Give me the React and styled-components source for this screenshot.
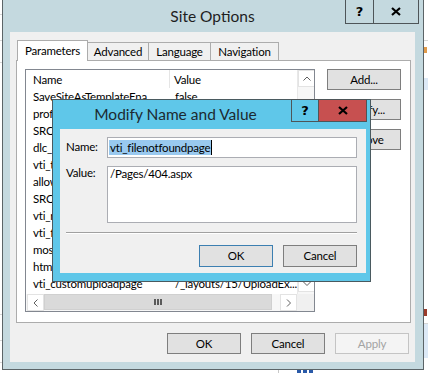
import React from "react";
import styled, { createGlobalStyle } from "styled-components";

const GlobalStyle = createGlobalStyle`
  html, body {
    margin: 0;
    padding: 0;
  }
  body {
    background: #ffffff;
    font-family: Lato, "Noto Sans", "Liberation Sans", sans-serif;
    font-size: 11.5px;
    letter-spacing: -0.2px;
    color: #000000;
  }
  * {
    box-sizing: border-box;
  }
`;

const line = (x, y, w, h, c) =>
  `linear-gradient(${c}, ${c}) ${x}px ${y}px / ${w}px ${h}px no-repeat`;

// whatever lies behind the dialog: a bit of a list page on both sides
const Desktop = styled.div`
  position: relative;
  width: 428px;
  height: 373px;
  overflow: hidden;
  background: ${[
    line(0, 14, 2, 1, "#d6d6d6"),
    line(0, 40, 2, 1, "#d6d6d6"),
    line(0, 62, 2, 1, "#d6d6d6"),
    line(0, 314, 2, 1, "#d6d6d6"),
    line(0, 340, 2, 1, "#d6d6d6"),
    line(0, 362, 2, 1, "#d6d6d6"),
    line(424, 40, 4, 1, "#d6d6d6"),
    line(424, 47, 3, 6, "#e09a4a"),
    line(424, 78, 4, 12, "#dce9f6"),
    line(424, 309, 3, 7, "#9a3a2a"),
    line(424, 323, 4, 1, "#d6d6d6"),
    line(424, 324, 4, 34, "#dce9f6"),
    line(278, 370, 1, 3, "#c8c8c8"),
    line(297, 370, 4, 3, "#2a5aa8"),
    line(303, 370, 4, 3, "#2a5aa8"),
    line(309, 370, 4, 3, "#2a5aa8"),
  ].join(", ")},
    #ffffff;
`;

const Window = styled.div`
  width: 422px;
  height: 371px;
  margin: -1px 0 0 2px;
  border: 1px solid #5b6467;
  background: #c4d9df;
  padding: 0 8px 7px 7px;
  display: flex;
  flex-direction: column;
`;

const TitleBar = styled.div`
  height: 32px;
  flex: none;
  display: grid;
  grid-template-columns: 1fr auto 1fr;
  align-items: center;
`;

const Title = styled.div`
  grid-column: 2;
  font-size: 15.5px;
  letter-spacing: 0;
  color: #1e1e1e;
  padding-bottom: 1px;
`;

const CaptionButtons = styled.div`
  grid-column: 3;
  justify-self: end;
  align-self: start;
  display: flex;
  margin: -1px ${(p) => p.$pull}px 0 0;
`;

const CaptionButton = styled.div`
  width: ${(p) => p.$w}px;
  height: ${(p) => p.$h}px;
  display: flex;
  align-items: center;
  justify-content: center;
  border: 1px solid #4e5558;
  border-left-width: ${(p) => (p.$joined ? 0 : 1)}px;
  background: ${(p) => p.$bg};
  font-family: "DejaVu Sans", sans-serif;
  font-weight: bold;
  font-size: 13px;
  letter-spacing: 0;
  color: #000;
`;

const Client = styled.div`
  flex: 1;
  background: #f0f0f0;
  padding: 8px 4px 8px 6px;
  display: flex;
  flex-direction: column;
`;

const TabStrip = styled.div`
  display: flex;
  align-items: flex-end;
  padding-left: 1px;
  height: 20px;
  position: relative;
  z-index: 1;
`;

const Tab = styled.div`
  width: ${(p) => p.$w}px;
  height: ${(p) => (p.$active ? 21 : 18)}px;
  margin-left: ${(p) => (p.$first ? 0 : -1)}px;
  margin-bottom: ${(p) => (p.$active ? -1 : 0)}px;
  border: 1px solid #acacac;
  border-bottom-width: 0;
  background: ${(p) => (p.$active ? "#ffffff" : "#f0f0f0")};
  display: flex;
  align-items: center;
  justify-content: center;
  padding-bottom: ${(p) => (p.$active ? 2 : 0)}px;
  white-space: nowrap;
  position: relative;
  z-index: ${(p) => (p.$active ? 2 : 1)};
`;

const Panel = styled.div`
  height: 263px;
  flex: none;
  border: 1px solid #acacac;
  background: #ffffff;
  padding: 8px 9px 10px 8px;
  display: flex;
  gap: 12px;
`;

const ListView = styled.div`
  width: 291px;
  height: 243px;
  border: 1px solid #828790;
  display: grid;
  grid-template-columns: 1fr 17px;
  grid-template-rows: 1fr 17px;
  overflow: hidden;
`;

const ListBody = styled.div`
  overflow: hidden;
`;

const HeaderRow = styled.div`
  display: flex;
  height: 18px;
  align-items: center;
`;

const HeaderCell = styled.div`
  width: ${(p) => (p.$w ? `${p.$w}px` : "auto")};
  flex: ${(p) => (p.$w ? "none" : 1)};
  height: 100%;
  display: flex;
  align-items: center;
  padding-left: ${(p) => p.$pad}px;
  border-right: ${(p) => (p.$w ? "1px solid #e5e5e5" : "none")};
`;

const Row = styled.div`
  display: flex;
  height: 17px;
  align-items: center;
`;

const Cell = styled.div`
  width: ${(p) => (p.$w ? `${p.$w}px` : "auto")};
  flex: ${(p) => (p.$w ? "none" : 1)};
  padding-left: ${(p) => p.$pad}px;
  white-space: nowrap;
  overflow: hidden;
`;

const VScroll = styled.div`
  display: flex;
  flex-direction: column;
  justify-content: space-between;
  border-left: 1px solid #e8e8e8;
  background: #f7f7f7;
  padding-bottom: 2px;
`;

const HScroll = styled.div`
  display: flex;
  align-items: stretch;
  padding: 0 0 1px 1px;
  background: #f7f7f7;
`;

const ArrowBox = styled.div`
  width: ${(p) => p.$w || 17}px;
  height: 17px;
  flex: none;
  display: flex;
  align-items: center;
  justify-content: center;
  background: #ffffff;
  border: 1px solid #e3e3e3;
`;

const Thumb = styled.div`
  width: 228px;
  flex: none;
  background: #dadada;
  border: 1px solid #d0d0d0;
  display: flex;
  align-items: center;
  justify-content: center;
`;

const Track = styled.div`
  flex: 1;
`;

const Corner = styled.div`
  background: #f0f0f0;
`;

const SideButtons = styled.div`
  display: flex;
  flex-direction: column;
  gap: 9px;
`;

const Button = styled.div`
  width: 74px;
  height: ${(p) => p.$h || 21}px;
  flex: none;
  display: flex;
  align-items: center;
  justify-content: center;
  padding-bottom: 1px;
  background: ${(p) => (p.$disabled ? "#f4f4f4" : "#e1e1e1")};
  border: 1px solid
    ${(p) => (p.$default ? "#3c7fb1" : p.$disabled ? "#c4c4c4" : "#7e7e7e")};
  color: ${(p) => (p.$disabled ? "#a3a3a3" : "#000000")};
  white-space: nowrap;
`;

const Footer = styled.div`
  display: flex;
  justify-content: flex-end;
  gap: 10px;
  margin-top: 10px;
  padding-right: 2px;
`;

/* the modal dialog lies over the site options window */
const Modal = styled.div`
  position: absolute;
  left: 52px;
  top: 99px;
  width: 319px;
  height: 183px;
  border: 1px solid #4a5a60;
  background: #5fc7e9;
  padding: 0 4px 9px 7px;
  display: flex;
  flex-direction: column;
  z-index: 5;
`;

const ModalTitleBar = styled.div`
  height: 29px;
  flex: none;
  display: flex;
  align-items: flex-start;
`;

const ModalTitle = styled.div`
  flex: 1;
  text-align: center;
  font-size: 15.5px;
  letter-spacing: 0;
  color: #1c2a30;
  padding-top: 5px;
  white-space: nowrap;
`;

const ModalClient = styled.div`
  flex: 1;
  background: #f0f0f0;
  padding: 8px 9px 6px 6px;
  display: flex;
  flex-direction: column;
`;

const Form = styled.div`
  display: grid;
  grid-template-columns: 41px 1fr;
  row-gap: 8px;
`;

const Label = styled.div`
  display: flex;
  align-items: ${(p) => (p.$top ? "flex-start" : "center")};
  padding-bottom: ${(p) => (p.$top ? 0 : 2)}px;
`;

const TextBox = styled.div`
  height: ${(p) => p.$h}px;
  border: 1px solid #abadb3;
  background: #ffffff;
  padding: ${(p) => (p.$multi ? "0 2px" : "0 1px")};
  display: flex;
  align-items: ${(p) => (p.$multi ? "flex-start" : "center")};
  white-space: nowrap;
`;

const Selected = styled.span`
  background: #99c9ef;
  padding: 0 1px;
  line-height: 15px;
`;

const Caret = styled.span`
  width: 1px;
  height: 15px;
  background: #000000;
`;

const Separator = styled.div`
  margin-top: 9px;
  border-top: 1px solid #a0a0a0;
  border-bottom: 1px solid #ffffff;
`;

const ModalFooter = styled.div`
  display: flex;
  justify-content: flex-end;
  gap: 10px;
  margin-top: 11px;
`;

const Chevron = ({ dir }) => {
  const pts = {
    up: "0.5,4.5 4,1 7.5,4.5",
    down: "0.5,1 4,4.5 7.5,1",
    left: "4.5,0.5 1,4 4.5,7.5",
    right: "1,0.5 4.5,4 1,7.5",
  }[dir];
  const vertical = dir === "up" || dir === "down";
  return (
    <svg width={vertical ? 8 : 6} height={vertical ? 6 : 8}>
      <polyline points={pts} fill="none" stroke="#606060" strokeWidth="1" />
    </svg>
  );
};

const Gripper = () => (
  <svg width="8" height="6">
    <rect x="0" y="0" width="2" height="6" fill="#5a5a5a" />
    <rect x="3" y="0" width="2" height="6" fill="#5a5a5a" />
    <rect x="6" y="0" width="2" height="6" fill="#5a5a5a" />
  </svg>
);

const CloseGlyph = () => (
  <svg width="10" height="9">
    <path d="M1 1 L9 8 M9 1 L1 8" stroke="#000" strokeWidth="2.2" />
  </svg>
);

const rows = [
  ["SaveSiteAsTemplateEna...", "false"],
  ["profileschemaversion", "1"],
  ["SRCH_ENH_FTR_URL_SITE", "/SearchCenter/Pages"],
  ["dlc_ExpirationLastRun", "2014-04-12"],
  ["vti_timecreated", "2014-01-10"],
  ["allowdesigner", "1"],
  ["SRCH_SITE_DROPDOWN", "ShowDD"],
  ["vti_rootwebguid", "b6e4d0e1"],
  ["vti_filenotfoundpage", "/Pages/404.aspx"],
  ["mossDefaultContent", "1"],
  ["htmleditor", "1"],
  ["vti_customuploadpage", "/_layouts/15/UploadEx..."],
];

const tabs = [
  ["Parameters", 71],
  ["Advanced", 62],
  ["Language", 63],
  ["Navigation", 69],
];

export default function App() {
  return (
    <Desktop>
      <GlobalStyle />
      <Window>
        <TitleBar>
          <Title>Site Options</Title>
          <CaptionButtons $pull={-4}>
            <CaptionButton $w={29} $h={25} $bg="#c4d9df">
              ?
            </CaptionButton>
            <CaptionButton $w={45} $h={25} $bg="#c4d9df" $joined>
              <CloseGlyph />
            </CaptionButton>
          </CaptionButtons>
        </TitleBar>
        <Client>
          <TabStrip>
            {tabs.map(([name, w], i) => (
              <Tab key={name} $w={w} $first={i === 0} $active={i === 0}>
                {name}
              </Tab>
            ))}
          </TabStrip>
          <Panel>
            <ListView>
              <ListBody>
                <HeaderRow>
                  <HeaderCell $w={144} $pad={7}>
                    Name
                  </HeaderCell>
                  <HeaderCell $pad={4}>Value</HeaderCell>
                </HeaderRow>
                {rows.map(([name, value]) => (
                  <Row key={name}>
                    <Cell $w={144} $pad={7}>
                      {name}
                    </Cell>
                    <Cell $pad={5}>{value}</Cell>
                  </Row>
                ))}
              </ListBody>
              <VScroll>
                <ArrowBox>
                  <Chevron dir="up" />
                </ArrowBox>
                <ArrowBox>
                  <Chevron dir="down" />
                </ArrowBox>
              </VScroll>
              <HScroll>
                <ArrowBox>
                  <Chevron dir="left" />
                </ArrowBox>
                <Thumb>
                  <Gripper />
                </Thumb>
                <Track />
                <ArrowBox>
                  <Chevron dir="right" />
                </ArrowBox>
              </HScroll>
              <Corner />
            </ListView>
            <SideButtons>
              <Button>Add...</Button>
              <Button>Modify...</Button>
              <Button>Remove</Button>
            </SideButtons>
          </Panel>
          <Footer>
            <Button>OK</Button>
            <Button>Cancel</Button>
            <Button $disabled>Apply</Button>
          </Footer>
        </Client>
      </Window>

      <Modal>
        <ModalTitleBar>
          <ModalTitle>Modify Name and Value</ModalTitle>
          <CaptionButtons $pull={-1}>
            <CaptionButton $w={28} $h={23} $bg="#5fc7e9">
              ?
            </CaptionButton>
            <CaptionButton $w={48} $h={23} $bg="#c75050" $joined>
              <CloseGlyph />
            </CaptionButton>
          </CaptionButtons>
        </ModalTitleBar>
        <ModalClient>
          <Form>
            <Label>Name:</Label>
            <TextBox $h={21}>
              <Selected>vti_filenotfoundpage</Selected>
              <Caret />
            </TextBox>
            <Label $top>Value:</Label>
            <TextBox $h={57} $multi>
              /Pages/404.aspx
            </TextBox>
          </Form>
          <Separator />
          <ModalFooter>
            <Button $default $h={22}>
              OK
            </Button>
            <Button $h={22}>Cancel</Button>
          </ModalFooter>
        </ModalClient>
      </Modal>
    </Desktop>
  );
}
